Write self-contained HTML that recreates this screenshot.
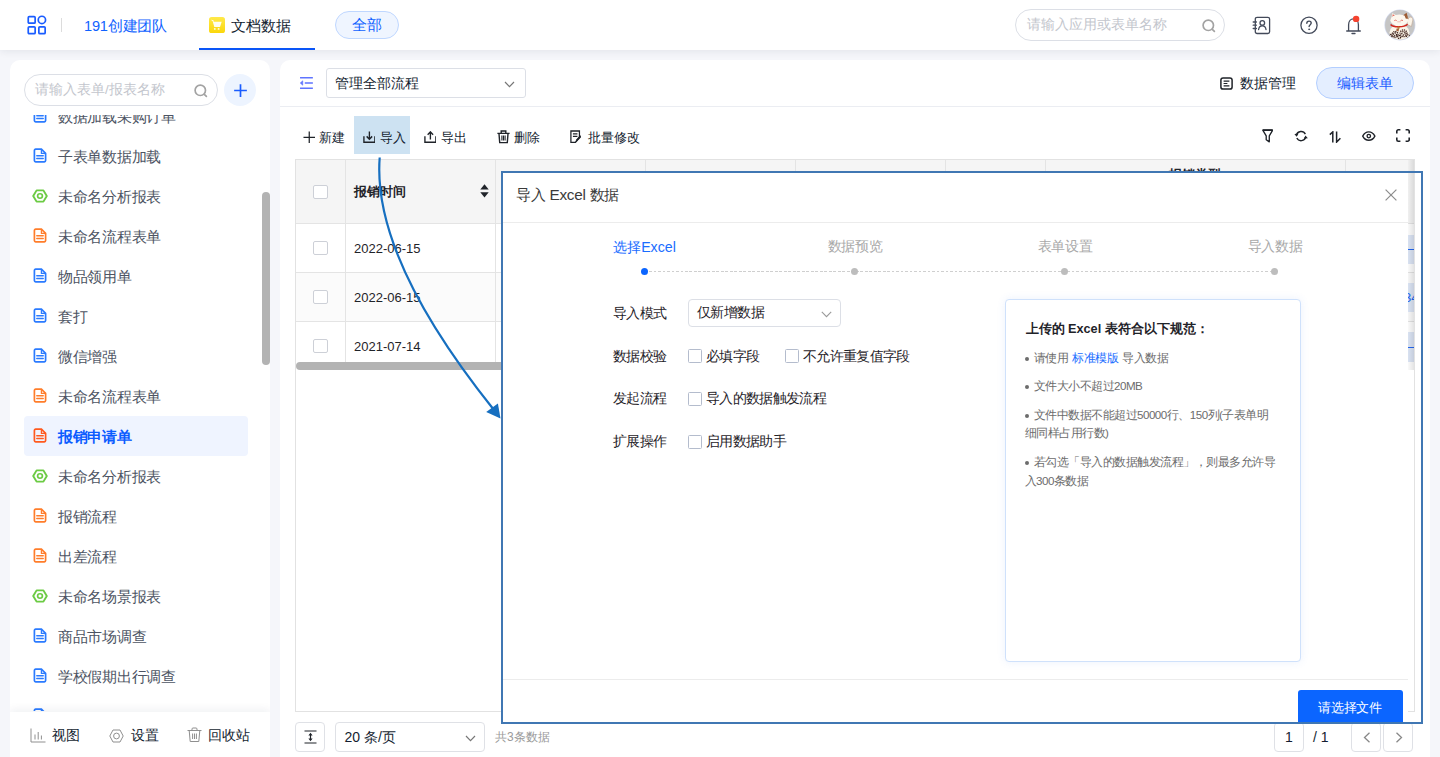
<!DOCTYPE html>
<html lang="zh">
<head>
<meta charset="utf-8">
<title>文档数据</title>
<style>
*{box-sizing:border-box;margin:0;padding:0}
html,body{width:1440px;height:757px;overflow:hidden}
body{font-family:"Liberation Sans",sans-serif;font-size:14px;color:#141e31;background:#f5f6fa;position:relative}
svg{display:block}
/* header */
#hdr{position:absolute;left:0;top:0;width:1440px;height:50px;background:#fff;box-shadow:0 1px 8px rgba(20,30,60,.09)}
#grid{position:absolute;left:27px;top:15px}
#team{position:absolute;left:84px;top:16px;letter-spacing:-.2px;font-size:14.6px;line-height:20px;color:#1062ff;white-space:nowrap}
#sep{position:absolute;left:61px;top:18px;width:1px;height:14px;background:#dcdcdc}
#tab{position:absolute;left:231px;top:16px;letter-spacing:-.1px;font-size:14.6px;line-height:20px;color:#141e31;white-space:nowrap}
#tabico{position:absolute;left:209px;top:17px}
#tabline{position:absolute;left:199px;top:47.5px;width:116px;height:2.5px;background:#0a55f7}
#all{position:absolute;left:335px;top:11px;width:64px;height:28px;border-radius:14px;background:#eff5ff;border:1px solid #bfd7ff;color:#1062ff;font-size:14.6px;line-height:27px;text-align:center}
#gsearch{position:absolute;left:1015px;top:9px;width:210px;height:32px;border-radius:16px;border:1px solid #dcdfe6;background:#fff}
#gsearch span{position:absolute;left:11px;top:6px;font-size:13.5px;line-height:18px;color:#c3c6cd;white-space:nowrap}
#gsearch svg{position:absolute;left:186px;top:8.500px}
.hi{position:absolute}
/* sidebar */
#side{position:absolute;left:10px;top:60px;width:260px;height:720px;background:#fff;border-radius:10px;overflow:hidden}
#ssearch{position:absolute;left:14px;top:14px;width:194px;height:32px;border-radius:16px;border:1px solid #dcdfe6;background:#fff}
#ssearch span{position:absolute;left:10px;top:6px;font-size:13.5px;line-height:18px;color:#c3c6cd;white-space:nowrap}
#ssearch svg{position:absolute;left:169px;top:8.500px}
#plus{position:absolute;left:214px;top:14px;width:32px;height:32px;border-radius:16px;background:#edf4ff}
#plus svg{position:absolute;left:8.5px;top:8.5px}
#list{position:absolute;left:0;top:55px;width:260px;height:596px;overflow:hidden}
.it{position:absolute;left:14px;width:224px;height:40px;border-radius:4px;font-size:14.5px;letter-spacing:-.3px;line-height:40px;color:#4d5463;white-space:nowrap}
.it span{position:absolute;left:34px;top:1px}
.it svg{position:absolute}
.it.d svg{left:9px;top:12px}
.it.h svg{left:8px;top:12.5px}
.it.sel{background:#eff4ff;color:#0b5cff;font-weight:bold}
#sscroll{position:absolute;left:252px;top:132px;width:8px;height:173px;border-radius:4px;background:#b3b3b3}
#sfoot{position:absolute;left:0;top:651.5px;width:260px;height:70px;background:#fff;box-shadow:0 -3px 8px rgba(20,30,60,.06)}
#sfoot span{position:absolute;top:13.5px;font-size:14px;line-height:20px;color:#141e31;white-space:nowrap}
#sfoot svg{position:absolute}
/* main */
#main{position:absolute;left:280px;top:60px;width:1150px;height:720px;background:#fff;border-radius:10px;overflow:hidden}
#mline{position:absolute;left:0;top:46px;width:1150px;height:1px;background:#ebedf2}
#ham{position:absolute;left:19px;top:16px}
#fsel{position:absolute;left:46px;top:8px;width:200px;height:30px;border:1px solid #dcdfe6;border-radius:3px;background:#fff}
#fsel span{position:absolute;left:8px;top:6px;letter-spacing:-.1px;font-size:13.5px;line-height:18px;color:#141e31;white-space:nowrap}
#fsel svg{position:absolute;left:177px;top:12px}
#dm{position:absolute;left:960px;top:14px;font-size:13.5px;line-height:20px;color:#141e31;white-space:nowrap}
#dmico{position:absolute;left:940px;top:16.5px}
#edit{position:absolute;left:1036px;top:7px;width:98px;height:32px;border-radius:16px;background:#e4eeff;border:1px solid #b3ceff;color:#1a5cff;font-size:13.5px;line-height:32px;text-align:center}
.tb{position:absolute;top:56px;height:38px;font-size:13px;line-height:44px;color:#141e31;white-space:nowrap}
.tb svg{position:absolute}
#imp{position:absolute;left:74px;top:56px;width:56px;height:38px;background:#cde2f2}
.ri{position:absolute}
/* table */
#tbl{position:absolute;left:15px;top:99px;width:1120px;height:553px;border:1px solid #e2e2e2;background:#fff;overflow:hidden}
#th{position:absolute;left:0;top:0;width:1120px;height:63px;background:#f5f5f5}
.hl{position:absolute;left:0;width:1120px;height:1px;background:#e4e4e4}
.vl{position:absolute;top:0;width:1px;height:210px;background:#e4e4e4}
.cb{position:absolute;left:17px;width:14.5px;height:14px;border:1px solid #cdd0d7;border-radius:2px;background:#fff}
.dt{position:absolute;left:58px;font-size:13px;line-height:16px;color:#1f2329;white-space:nowrap}
#hscroll{position:absolute;left:0;top:202px;width:900px;height:8px;background:#b3b3b3;border-radius:4px}
.pbox{position:absolute;top:662px;height:30px;border:1px solid #dfe1e6;border-radius:4px;background:#fff}
/* dialog */
#dlg{position:absolute;left:503px;top:173px;width:905px;height:550px;background:#fff;overflow:hidden;font-size:13.5px;color:#1f2329}
#dtitle{position:absolute;left:13px;top:12px;font-size:15.3px;letter-spacing:-.25px;line-height:20px;color:#3a3a3a;white-space:nowrap}
.dline{position:absolute;left:0;width:905px;height:1px;background:#ececec}
.stp{position:absolute;top:64px;letter-spacing:-.4px;width:120px;text-align:center;font-size:13.5px;line-height:20px;color:#a9a9a9;white-space:nowrap}
.dot{position:absolute;top:94.5px;width:7px;height:7px;border-radius:50%;background:#bdbdbd}
.dash{position:absolute;top:97.5px;height:1px;background:repeating-linear-gradient(to right,#cfcfcf 0,#cfcfcf 2.5px,transparent 2.5px,transparent 4.5px)}
.lb{position:absolute;left:109.5px;letter-spacing:-.45px;font-size:13.5px;line-height:18px;color:#1f2329;white-space:nowrap}
.ck{position:absolute;width:13.5px;height:14px;border:1px solid #b4bccd;border-radius:1.5px;background:#fff}
.ct{position:absolute;letter-spacing:-.65px;font-size:13.5px;line-height:18px;color:#1f2329;white-space:nowrap}
#dsel{position:absolute;left:185px;top:126px;width:153px;height:28px;border:1px solid #dcdfe6;border-radius:4px;background:#fff}
#dsel span{position:absolute;left:8px;top:4px;letter-spacing:-.6px;font-size:13.5px;line-height:18px;white-space:nowrap;color:#1f2329}
#dsel svg{position:absolute;left:132px;top:11px}
#info{position:absolute;left:502px;top:126px;width:296px;height:363px;border:1px solid #cfe1fb;border-radius:4px;background:#fff;box-shadow:0 0 8px rgba(60,120,240,.10)}
#info h4{position:absolute;left:19.5px;top:21px;font-size:12.7px;line-height:16px;font-weight:bold;color:#1f2329;white-space:nowrap}
#info p{position:absolute;left:18.5px;width:270px;white-space:nowrap;letter-spacing:-.5px;font-size:11.6px;line-height:18.6px;color:#6c6c6c}
#info i{display:inline-block;width:4px;height:4px;border-radius:50%;background:#6c6c6c;margin:0 5px 0 0;vertical-align:middle;position:relative;top:.3px}
#info a{color:#1a6dff;text-decoration:none}
#dbtn{position:absolute;letter-spacing:-.2px;left:794.5px;top:517px;width:105px;height:40px;background:#0b65ff;border-radius:3px;color:#fff;font-size:13.3px;line-height:35px;text-align:center}
#anno{position:absolute;left:501px;top:171px;width:922px;height:553px;border:2px solid #4077b3;pointer-events:none}
#dshadow{position:absolute;left:1408px;top:160px;width:6px;height:210px}
#arrow{position:absolute;left:0;top:0;pointer-events:none}
</style>
</head>
<body>
<div id="hdr">
  <svg id="grid" width="20" height="20" viewBox="0 0 20 20" fill="none" stroke="#1a5cff" stroke-width="1.700"><rect x="1.250" y="1.650" width="6.900" height="6.500" rx="1"/><circle cx="14.900" cy="4.900" r="3.650"/><rect x="1.250" y="11.850" width="6.900" height="6.800" rx="1"/><rect x="11.850" y="11.850" width="6.300" height="6.800" rx="1"/></svg>
  <div id="sep"></div>
  <div id="team">191创建团队</div>
  <svg id="tabico" width="16" height="16" viewBox="0 0 16 16"><defs><linearGradient id="yg" x1="0" y1="0" x2="0" y2="1"><stop offset="0" stop-color="#ffe94a"/><stop offset="1" stop-color="#fbd70c"/></linearGradient></defs><rect width="16" height="16" rx="2.600" fill="url(#yg)"/><path d="M2.900 3.300L4.300 3.500L4.700 4.700H12.700L11 10.100H5.300L3.700 4.300z" fill="#fffdf0"/><path d="M2.900 3.300L4.100 3.700" stroke="#fffdf0" stroke-width=".9" stroke-linecap="round"/><circle cx="5.800" cy="11.900" r=".95" fill="#fffbe0"/><circle cx="9.600" cy="11.900" r=".95" fill="#fffbe0"/></svg>
  <div id="tab">文档数据</div>
  <div id="tabline"></div>
  <div id="all">全部</div>
  <div id="gsearch"><span>请输入应用或表单名称</span><svg width="14" height="14" viewBox="0 0 14 14" fill="none" stroke="#a3a3a3" stroke-width="1.700" stroke-linecap="round"><circle cx="6.300" cy="6.300" r="5.200"/><path d="M10.300 10.300L12.400 12.400"/></svg></div>
  <svg class="hi" style="left:1252px;top:16px" width="19" height="19" viewBox="0 0 19 19" fill="none" stroke="#434a5a" stroke-width="1.300" stroke-linecap="round"><rect x="3.300" y="1.300" width="14.300" height="16.200" rx="1.800"/><path d="M1.200 6h3.200M1.200 9.200h3.200M1.200 12.500h3.200"/><circle cx="10.300" cy="6.900" r="2.300"/><path d="M6.600 13.500c.3-2.500 1.800-3.700 3.700-3.700s3.400 1.200 3.700 3.700"/></svg>
  <svg class="hi" style="left:1299px;top:16px" width="20" height="19" viewBox="0 0 20 19" fill="none" stroke="#434a5a" stroke-width="1.300" stroke-linecap="round"><circle cx="10" cy="9.200" r="8.100"/><path d="M7.800 7.300c0-1.400 1-2.200 2.200-2.200s2.200 .8 2.200 2c0 1.500-2.100 1.700-2.100 3.500" stroke-width="1.400"/><circle cx="10.100" cy="13.300" r=".55" fill="#434a5a" stroke-width=".7"/></svg>
  <svg class="hi" style="left:1345px;top:14px" width="18" height="22" viewBox="0 0 18 22" fill="none" stroke="#434a5a" stroke-width="1.300" stroke-linecap="round" stroke-linejoin="round"><path d="M1.700 17h13.600M3.600 17V10.800c0-3.700 2.300-5.900 4.900-5.900s4.900 2.200 4.900 5.900V17"/><path d="M7 19.500h3"/><circle cx="11.100" cy="4.900" r="3.200" fill="#f5432f" stroke="none"/></svg>
  <svg class="hi" style="left:1384px;top:9px" width="32" height="32" viewBox="0 0 32 32"><defs><clipPath id="av"><circle cx="15.900" cy="15.900" r="14.800"/></clipPath></defs><circle cx="15.900" cy="15.900" r="15.500" fill="#d3daee"/><g clip-path="url(#av)"><rect width="32" height="32" fill="#c5c5c5"/><path d="M23.400 15.500c-.4-3 .2-6.200 2.200-7.200 2-.8 3.400 .6 3.200 2.800l-1.400 6.400z" fill="#fbf4e8" stroke="#b99a86" stroke-width=".5"/><ellipse cx="15.500" cy="23.500" rx="10" ry="8" fill="#fbf4e8"/><path d="M7.400 9.600L8.300 4L12.600 6.600z" fill="#fbf4e8"/><path d="M8.300 8.600L8.800 5.200L11.200 6.700z" fill="#e0564a"/><path d="M18.300 6.900L22.600 3.700L24.300 10z" fill="#9c5a32"/><ellipse cx="15.300" cy="11.200" rx="8.900" ry="5.800" fill="#fdf7ee"/><path d="M20.500 6.200c1.800 .4 3 1.800 3.400 3.800l-2.200-.6z" fill="#9c5a32"/><path d="M10.300 11.600q1.200-.9 2.400 0M16.600 11.600q1.200-.9 2.400 0" stroke="#e0564a" stroke-width=".8" fill="none"/><path d="M13.200 12.800h3.600" stroke="#e59a8e" stroke-width=".6"/><path d="M6.600 15.400C9.500 18.600 20 18.600 23.600 15.200" stroke="#d3261c" stroke-width="1.500" fill="none"/><circle cx="14.500" cy="18.700" r="1.200" fill="#b9803a"/><path d="M12.600 19.400l2.400 .6-.4 2.400-2.400-.6z" fill="#a5623a"/><g fill="none" stroke="#3a1d17" stroke-width="1.300" stroke-dasharray="1.200 .8"><circle cx="11" cy="25.500" r="1.500"/><circle cx="11" cy="25.500" r="3"/><circle cx="19.500" cy="24.300" r="1.700"/><circle cx="19.500" cy="24.300" r="3.400"/><circle cx="15.200" cy="28" r="1.500"/><circle cx="24" cy="27.500" r="1.600"/><circle cx="6.500" cy="27" r="1.500"/></g></g></svg>
</div>

<div id="side">
  <div id="ssearch"><span>请输入表单/报表名称</span><svg width="14" height="14" viewBox="0 0 14 14" fill="none" stroke="#a3a3a3" stroke-width="1.700" stroke-linecap="round"><circle cx="6.300" cy="6.300" r="5.200"/><path d="M10.300 10.300L12.400 12.400"/></svg></div>
  <div id="plus"><svg width="15" height="15" viewBox="0 0 16 16" stroke="#1a5cff" stroke-width="1.800" stroke-linecap="butt"><path d="M8 1.2V14.8M1.2 8H14.8"/></svg></div>
  <div id="list">
<div class="it d" style="top:-19px"><svg width="14" height="15" viewBox="0 0 14 15" fill="none" stroke="#2b7bff" stroke-width="1.7" stroke-linejoin="round" stroke-linecap="round"><path d="M2.6 1.2H8.4L12.6 5.4V12.6a1.2 1.2 0 0 1-1.2 1.2H2.6a1.2 1.2 0 0 1-1.2-1.2V2.4a1.2 1.2 0 0 1 1.2-1.2z"/><path d="M8.4 1.4V5.4H12.4" stroke-width="1.3"/><path d="M3.800 7.800H10.200M3.800 10.500H10.200" stroke-width="1.500"/></svg><span>数据加载采购订单</span></div>
<div class="it d" style="top:21px"><svg width="14" height="15" viewBox="0 0 14 15" fill="none" stroke="#2b7bff" stroke-width="1.7" stroke-linejoin="round" stroke-linecap="round"><path d="M2.6 1.2H8.4L12.6 5.4V12.6a1.2 1.2 0 0 1-1.2 1.2H2.6a1.2 1.2 0 0 1-1.2-1.2V2.4a1.2 1.2 0 0 1 1.2-1.2z"/><path d="M8.4 1.4V5.4H12.4" stroke-width="1.3"/><path d="M3.800 7.800H10.200M3.800 10.500H10.200" stroke-width="1.500"/></svg><span>子表单数据加载</span></div>
<div class="it h" style="top:61px"><svg width="16" height="14" viewBox="0 0 16 15" preserveAspectRatio="none" fill="none" stroke="#6ccb44" stroke-width="1.900" stroke-linejoin="round"><path d="M1.2 7.5L4.6 1.5H11.4L14.8 7.5L11.4 13.5H4.6z"/><circle cx="8" cy="7.5" r="2.4" stroke-width="1.7"/></svg><span>未命名分析报表</span></div>
<div class="it d" style="top:101px"><svg width="14" height="15" viewBox="0 0 14 15" fill="none" stroke="#ff7d2b" stroke-width="1.7" stroke-linejoin="round" stroke-linecap="round"><path d="M2.6 1.2H8.4L12.6 5.4V12.6a1.2 1.2 0 0 1-1.2 1.2H2.6a1.2 1.2 0 0 1-1.2-1.2V2.4a1.2 1.2 0 0 1 1.2-1.2z"/><path d="M8.4 1.4V5.4H12.4" stroke-width="1.3"/><path d="M3.800 7.800H10.200M3.800 10.500H10.200" stroke-width="1.500"/></svg><span>未命名流程表单</span></div>
<div class="it d" style="top:141px"><svg width="14" height="15" viewBox="0 0 14 15" fill="none" stroke="#2b7bff" stroke-width="1.7" stroke-linejoin="round" stroke-linecap="round"><path d="M2.6 1.2H8.4L12.6 5.4V12.6a1.2 1.2 0 0 1-1.2 1.2H2.6a1.2 1.2 0 0 1-1.2-1.2V2.4a1.2 1.2 0 0 1 1.2-1.2z"/><path d="M8.4 1.4V5.4H12.4" stroke-width="1.3"/><path d="M3.800 7.800H10.200M3.800 10.500H10.200" stroke-width="1.500"/></svg><span>物品领用单</span></div>
<div class="it d" style="top:181px"><svg width="14" height="15" viewBox="0 0 14 15" fill="none" stroke="#2b7bff" stroke-width="1.7" stroke-linejoin="round" stroke-linecap="round"><path d="M2.6 1.2H8.4L12.6 5.4V12.6a1.2 1.2 0 0 1-1.2 1.2H2.6a1.2 1.2 0 0 1-1.2-1.2V2.4a1.2 1.2 0 0 1 1.2-1.2z"/><path d="M8.4 1.4V5.4H12.4" stroke-width="1.3"/><path d="M3.800 7.800H10.200M3.800 10.500H10.200" stroke-width="1.500"/></svg><span>套打</span></div>
<div class="it d" style="top:221px"><svg width="14" height="15" viewBox="0 0 14 15" fill="none" stroke="#2b7bff" stroke-width="1.7" stroke-linejoin="round" stroke-linecap="round"><path d="M2.6 1.2H8.4L12.6 5.4V12.6a1.2 1.2 0 0 1-1.2 1.2H2.6a1.2 1.2 0 0 1-1.2-1.2V2.4a1.2 1.2 0 0 1 1.2-1.2z"/><path d="M8.4 1.4V5.4H12.4" stroke-width="1.3"/><path d="M3.800 7.800H10.200M3.800 10.500H10.200" stroke-width="1.500"/></svg><span>微信增强</span></div>
<div class="it d" style="top:261px"><svg width="14" height="15" viewBox="0 0 14 15" fill="none" stroke="#ff7d2b" stroke-width="1.7" stroke-linejoin="round" stroke-linecap="round"><path d="M2.6 1.2H8.4L12.6 5.4V12.6a1.2 1.2 0 0 1-1.2 1.2H2.6a1.2 1.2 0 0 1-1.2-1.2V2.4a1.2 1.2 0 0 1 1.2-1.2z"/><path d="M8.4 1.4V5.4H12.4" stroke-width="1.3"/><path d="M3.800 7.800H10.200M3.800 10.500H10.200" stroke-width="1.500"/></svg><span>未命名流程表单</span></div>
<div class="it sel d" style="top:301px"><svg width="14" height="15" viewBox="0 0 14 15" fill="none" stroke="#ff5a1f" stroke-width="1.7" stroke-linejoin="round" stroke-linecap="round"><path d="M2.6 1.2H8.4L12.6 5.4V12.6a1.2 1.2 0 0 1-1.2 1.2H2.6a1.2 1.2 0 0 1-1.2-1.2V2.4a1.2 1.2 0 0 1 1.2-1.2z"/><path d="M8.4 1.4V5.4H12.4" stroke-width="1.3"/><path d="M3.800 7.800H10.200M3.800 10.500H10.200" stroke-width="1.500"/></svg><span>报销申请单</span></div>
<div class="it h" style="top:341px"><svg width="16" height="14" viewBox="0 0 16 15" preserveAspectRatio="none" fill="none" stroke="#6ccb44" stroke-width="1.900" stroke-linejoin="round"><path d="M1.2 7.5L4.6 1.5H11.4L14.8 7.5L11.4 13.5H4.6z"/><circle cx="8" cy="7.5" r="2.4" stroke-width="1.7"/></svg><span>未命名分析报表</span></div>
<div class="it d" style="top:381px"><svg width="14" height="15" viewBox="0 0 14 15" fill="none" stroke="#ff7d2b" stroke-width="1.7" stroke-linejoin="round" stroke-linecap="round"><path d="M2.6 1.2H8.4L12.6 5.4V12.6a1.2 1.2 0 0 1-1.2 1.2H2.6a1.2 1.2 0 0 1-1.2-1.2V2.4a1.2 1.2 0 0 1 1.2-1.2z"/><path d="M8.4 1.4V5.4H12.4" stroke-width="1.3"/><path d="M3.800 7.800H10.200M3.800 10.500H10.200" stroke-width="1.500"/></svg><span>报销流程</span></div>
<div class="it d" style="top:421px"><svg width="14" height="15" viewBox="0 0 14 15" fill="none" stroke="#ff7d2b" stroke-width="1.7" stroke-linejoin="round" stroke-linecap="round"><path d="M2.6 1.2H8.4L12.6 5.4V12.6a1.2 1.2 0 0 1-1.2 1.2H2.6a1.2 1.2 0 0 1-1.2-1.2V2.4a1.2 1.2 0 0 1 1.2-1.2z"/><path d="M8.4 1.4V5.4H12.4" stroke-width="1.3"/><path d="M3.800 7.800H10.200M3.800 10.500H10.200" stroke-width="1.500"/></svg><span>出差流程</span></div>
<div class="it h" style="top:461px"><svg width="16" height="14" viewBox="0 0 16 15" preserveAspectRatio="none" fill="none" stroke="#6ccb44" stroke-width="1.900" stroke-linejoin="round"><path d="M1.2 7.5L4.6 1.5H11.4L14.8 7.5L11.4 13.5H4.6z"/><circle cx="8" cy="7.5" r="2.4" stroke-width="1.7"/></svg><span>未命名场景报表</span></div>
<div class="it d" style="top:501px"><svg width="14" height="15" viewBox="0 0 14 15" fill="none" stroke="#2b7bff" stroke-width="1.7" stroke-linejoin="round" stroke-linecap="round"><path d="M2.6 1.2H8.4L12.6 5.4V12.6a1.2 1.2 0 0 1-1.2 1.2H2.6a1.2 1.2 0 0 1-1.2-1.2V2.4a1.2 1.2 0 0 1 1.2-1.2z"/><path d="M8.4 1.4V5.4H12.4" stroke-width="1.3"/><path d="M3.800 7.800H10.200M3.800 10.500H10.200" stroke-width="1.500"/></svg><span>商品市场调查</span></div>
<div class="it d" style="top:541px"><svg width="14" height="15" viewBox="0 0 14 15" fill="none" stroke="#2b7bff" stroke-width="1.7" stroke-linejoin="round" stroke-linecap="round"><path d="M2.6 1.2H8.4L12.6 5.4V12.6a1.2 1.2 0 0 1-1.2 1.2H2.6a1.2 1.2 0 0 1-1.2-1.2V2.4a1.2 1.2 0 0 1 1.2-1.2z"/><path d="M8.4 1.4V5.4H12.4" stroke-width="1.3"/><path d="M3.800 7.800H10.200M3.800 10.500H10.200" stroke-width="1.500"/></svg><span>学校假期出行调查</span></div>
<div class="it d" style="top:581px"><svg width="14" height="15" viewBox="0 0 14 15" fill="none" stroke="#2b7bff" stroke-width="1.7" stroke-linejoin="round" stroke-linecap="round"><path d="M2.6 1.2H8.4L12.6 5.4V12.6a1.2 1.2 0 0 1-1.2 1.2H2.6a1.2 1.2 0 0 1-1.2-1.2V2.4a1.2 1.2 0 0 1 1.2-1.2z"/><path d="M8.4 1.4V5.4H12.4" stroke-width="1.3"/><path d="M3.800 7.800H10.200M3.800 10.500H10.200" stroke-width="1.500"/></svg><span></span></div>
  </div>
  <div id="sscroll"></div>
  <div id="sfoot">
    <svg style="left:20px;top:16px" width="16" height="15" viewBox="0 0 16 15" fill="none" stroke="#8f8f8f" stroke-width="1"><path d="M1 .5V14H15.5"/><path d="M5 6.5V11.5M8.2 4V11.5M11.4 7.5V11.5"/></svg>
    <span style="left:42px">视图</span>
    <svg style="left:99px;top:17px" width="15" height="14" viewBox="0 0 15 14" fill="none" stroke="#8f8f8f" stroke-width="1"><path d="M.8 7L4 1H11L14.2 7L11 13H4z"/><circle cx="7.5" cy="7" r="2.9"/></svg>
    <span style="left:121px">设置</span>
    <svg style="left:177px;top:15px" width="15" height="16" viewBox="0 0 15 16" fill="none" stroke="#8f8f8f" stroke-width="1"><path d="M.5 3.5H14.5M5 3.5V2a1 1 0 0 1 1-1H9a1 1 0 0 1 1 1V3.5M2.2 3.5L3.2 14.5H11.8L12.8 3.5M5.6 6.5V12M7.5 6.5V12M9.4 6.5V12"/></svg>
    <span style="left:198px">回收站</span>
  </div>
</div>

<div id="main">
  <div id="mline"></div>
  <svg id="ham" width="14.5" height="14" viewBox="0 0 14 14" preserveAspectRatio="none" fill="none" stroke="#5f74ff" stroke-width="1.5"><path d="M1 1.8H13.4M5.6 7H13.4M1 12.2H13.4"/><path d="M3.6 4.8L1.2 7L3.6 9.2z" fill="#5f74ff" stroke-width=".6"/></svg>
  <div id="fsel"><span>管理全部流程</span><svg width="11" height="7" viewBox="0 0 11 7" fill="none" stroke="#777" stroke-width="1.2"><path d="M1 1L5.5 5.6L10 1"/></svg></div>
  <svg id="dmico" width="13" height="13" viewBox="0 0 13 13" fill="none" stroke="#1f2329" stroke-width="1.5"><rect x=".9" y=".9" width="11.2" height="11.2" rx="2.2"/><path d="M3.6 4.2H9.4M3.6 6.500H7.400M3.600 8.800H9.400" stroke-width="1.200"/></svg>
  <div id="dm">数据管理</div>
  <div id="edit">编辑表单</div>

  <div id="imp"></div>
  <div class="tb" style="left:38.5px"><svg style="left:-16px;top:14.5px" width="12.500" height="12.500" viewBox="0 0 13 13" stroke="#1f2329" stroke-width="1.3"><path d="M6.5 .5V12.5M.5 6.5H12.5"/></svg>新建</div>
  <div class="tb" style="left:100px"><svg style="left:-17.5px;top:14.500px" width="12.800" height="12.500" viewBox="0 0 14 13" preserveAspectRatio="none" fill="none" stroke="#1f2329" stroke-width="1.5"><path d="M1 5.4V11.6H13V5.4"/><path d="M7 .6V8.2M4 5.6L7 8.6L10 5.6"/></svg>导入</div>
  <div class="tb" style="left:161px"><svg style="left:-17.5px;top:14.500px" width="12.800" height="12.500" viewBox="0 0 14 13" preserveAspectRatio="none" fill="none" stroke="#1f2329" stroke-width="1.5"><path d="M1 5.4V11.6H13V5.4"/><path d="M7 8.8V1.2M4 3.8L7 .9L10 3.8"/></svg>导出</div>
  <div class="tb" style="left:233.5px"><svg style="left:-16.5px;top:13.5px" width="13" height="14" viewBox="0 0 13 14" fill="none" stroke="#1f2329" stroke-width="1.4"><path d="M.4 3.4H12.6M4.2 3.2V1H8.8V3.2"/><path d="M2 3.6L2.7 12.6H10.3L11 3.6" /><path d="M4.9 5.6V10.6M6.5 5.6V10.6M8.1 5.6V10.6" stroke-width="1.1"/></svg>删除</div>
  <div class="tb" style="left:307.5px"><svg style="left:-18px;top:14px" width="11.800" height="13.500" viewBox="0 0 13 14" preserveAspectRatio="none" fill="none" stroke="#1f2329" stroke-width="1.4"><path d="M1 1H10.4V7.4L6 12.8H1z"/><path d="M3.2 4H8.2M3.2 6.6H8.2" stroke-width="1.1"/><path d="M6.4 12.6L7.4 9.6L11.2 5.8L12.4 7L8.6 10.8z" fill="#1f2329" stroke-width=".6"/></svg>批量修改</div>

  <svg class="ri" style="left:981.500px;top:68.500px" width="11.500" height="14.200" viewBox="0 0 12 15" preserveAspectRatio="none" fill="none" stroke="#1f2329" stroke-width="1.4" stroke-linejoin="round"><path d="M.8 1.2H11.2L7.6 7.2V13.6L4.4 11.4V7.2z"/><path d="M1 1.2H11" stroke-width="2"/></svg>
  <svg class="ri" style="left:1014px;top:69.500px" width="14.200" height="12.200" viewBox="0 0 15 13" preserveAspectRatio="none" fill="none" stroke="#1f2329" stroke-width="1.5"><path d="M2.6 5.6A5 5 0 0 1 12 4.4"/><path d="M12.4 7.4A5 5 0 0 1 3 8.6"/><path d="M.4 4.2L2.8 7.2L4.8 3.8z" fill="#1f2329" stroke="none"/><path d="M14.6 8.8L12.2 5.8L10.2 9.2z" fill="#1f2329" stroke="none"/></svg>
  <svg class="ri" style="left:1049px;top:70.5px" width="13" height="12" viewBox="0 0 13 12" fill="none" stroke="#1f2329" stroke-width="1.5"><path d="M.8 3.6L3.8 .9V11.4"/><path d="M7.6 .6V11.1L11.4 7.2"/></svg>
  <svg class="ri" style="left:1082.300px;top:70.500px" width="13.600" height="10.200" viewBox="0 0 15 11" preserveAspectRatio="none" fill="none" stroke="#1f2329" stroke-width="1.5"><path d="M.8 5.5C2.4 2.4 4.8 1 7.5 1s5.1 1.4 6.700 4.5C12.600 8.600 10.200 10 7.500 10S2.400 8.600 .800 5.500z"/><circle cx="7.500" cy="5.500" r="1.900"/></svg>
  <svg class="ri" style="left:1116px;top:69.200px" width="14" height="13" viewBox="0 0 14 13" fill="none" stroke="#1f2329" stroke-width="1.6"><path d="M.8 4.4V2.300A1.500 1.500 0 0 1 2.300 .8H4.400M9.600 .8H11.700A1.500 1.500 0 0 1 13.200 2.300V4.400M13.200 8.600V10.700A1.500 1.500 0 0 1 11.700 12.200H9.600M4.400 12.200H2.300A1.500 1.500 0 0 1 .8 10.700V8.600"/></svg>

  <div id="tbl">
    <div id="th"></div>
    <div class="hl" style="top:63px"></div><div class="hl" style="top:112px"></div><div class="hl" style="top:161px"></div>
    <div style="position:absolute;left:0;top:113px;width:1120px;height:48px;background:#fbfbfb"></div>
    <div class="vl" style="left:49px"></div><div class="vl" style="left:199px"></div><div class="vl" style="left:349px"></div><div class="vl" style="left:499px"></div><div class="vl" style="left:649px"></div><div class="vl" style="left:749px"></div><div class="vl" style="left:1049px"></div>
    <div class="cb" style="top:25px"></div><div class="cb" style="top:81px"></div><div class="cb" style="top:130px"></div><div class="cb" style="top:179px"></div>
    <div class="dt" style="top:23.500px;font-weight:bold;color:#1f2329">报销时间</div>
    <svg style="position:absolute;left:184px;top:24px" width="9" height="14" viewBox="0 0 9 14" fill="#1f2329"><path d="M4.500 .3L8.700 5.600H.3z"/><path d="M4.500 13.600L8.700 8.300H.3z"/></svg>
    <div class="dt" style="top:80.500px">2022-06-15</div>
    <div class="dt" style="top:129.500px">2022-06-15</div>
    <div class="dt" style="top:178.500px">2021-07-14</div>
    <div class="dt" style="top:7px;width:300px;left:749px;text-align:center;font-weight:bold">报销类型</div>
    <div style="position:absolute;left:1112px;top:75px;width:8px;height:29px;background:#dde6f6"></div>
    <div style="position:absolute;left:1112px;top:123px;width:8px;height:29px;background:#dde6f6"></div>
    <div style="position:absolute;left:1112px;top:172px;width:8px;height:30px;background:#dde6f6"></div>
    <div style="position:absolute;left:1112px;top:88.500px;width:8px;height:1.500px;background:#2468f2"></div>
    <div style="position:absolute;left:1112px;top:186.500px;width:8px;height:1.500px;background:#2468f2"></div>
    <div style="position:absolute;left:1108px;top:130px;font-size:13px;line-height:16px;color:#2468f2">34</div>
    <div id="hscroll"></div>
  </div>

  <div class="pbox" style="left:15px;width:30px"><svg style="position:absolute;left:8px;top:7px" width="13" height="14" viewBox="0 0 13 14" fill="none" stroke="#1f2329" stroke-width="1.2"><path d="M.5 1H12.500M.5 13H12.500"/><path d="M6.500 4V10" /><path d="M6.500 2.800L8.600 5.400H4.400z M6.500 11.200L8.600 8.600H4.400z" fill="#1f2329" stroke="none"/></svg></div>
  <div class="pbox" style="left:55px;width:150px"><span style="position:absolute;left:8.500px;top:5px;font-size:14px;line-height:18px;white-space:nowrap">20 条/页</span><svg style="position:absolute;left:129px;top:12px" width="11" height="7" viewBox="0 0 11 7" fill="none" stroke="#777" stroke-width="1.2"><path d="M1 1L5.500 5.600L10 1"/></svg></div>
  <div style="position:absolute;left:215px;top:669px;font-size:12px;line-height:16px;color:#9a9a9a;white-space:nowrap">共3条数据</div>
  <div class="pbox" style="left:994px;width:30px;text-align:center;font-size:14px;line-height:28px">1</div>
  <div style="position:absolute;left:1033px;top:668px;font-size:14px;line-height:18px;white-space:nowrap">/ 1</div>
  <div class="pbox" style="left:1071px;width:30px"><svg style="position:absolute;left:10.500px;top:9px" width="8" height="11" viewBox="0 0 8 11" fill="none" stroke="#888" stroke-width="1.300"><path d="M6.500 .8L1.500 5.500L6.500 10.200"/></svg></div>
  <div class="pbox" style="left:1103px;width:30px"><svg style="position:absolute;left:10.500px;top:9px" width="8" height="11" viewBox="0 0 8 11" fill="none" stroke="#888" stroke-width="1.300"><path d="M1.500 .8L6.500 5.500L1.500 10.200"/></svg></div>
</div>

<div id="dshadow" style="background:linear-gradient(to right,rgba(0,0,0,.02),rgba(0,0,0,.11))"></div>

<div id="dlg">
  <div id="dtitle">导入 Excel 数据</div>
  <svg style="position:absolute;left:882px;top:16px" width="12" height="12" viewBox="0 0 12 12" stroke="#8c8c8c" stroke-width="1.200"><path d="M.6 .6L11.400 11.400M11.400 .6L.6 11.400"/></svg>
  <div class="dline" style="top:49px"></div>
  <div class="stp" style="left:81.500px;color:#1a6dff;font-size:14.200px;letter-spacing:0">选择Excel</div>
  <div class="stp" style="left:292px">数据预览</div>
  <div class="stp" style="left:502px">表单设置</div>
  <div class="stp" style="left:712px">导入数据</div>
  <div class="dash" style="left:146px;width:622px"></div>
  <div class="dot" style="left:137.500px;background:#0b65ff"></div>
  <div class="dot" style="left:347.500px"></div>
  <div class="dot" style="left:557.500px"></div>
  <div class="dot" style="left:767.500px"></div>

  <div class="lb" style="top:131.500px">导入模式</div>
  <div id="dsel"><span>仅新增数据</span><svg width="11" height="7" viewBox="0 0 11 7" fill="none" stroke="#9a9a9a" stroke-width="1.100"><path d="M.8 .8L5.500 5.600L10.200 .8"/></svg></div>
  <div class="lb" style="top:174.500px">数据校验</div>
  <div class="ck" style="left:185px;top:176px"></div><div class="ct" style="left:203px;top:174.500px">必填字段</div>
  <div class="ck" style="left:282px;top:176px"></div><div class="ct" style="left:300px;top:174.500px">不允许重复值字段</div>
  <div class="lb" style="top:216.500px">发起流程</div>
  <div class="ck" style="left:185px;top:219px"></div><div class="ct" style="left:203px;top:216.500px">导入的数据触发流程</div>
  <div class="lb" style="top:259.500px">扩展操作</div>
  <div class="ck" style="left:185px;top:262px"></div><div class="ct" style="left:203px;top:259.500px">启用数据助手</div>

  <div id="info">
    <h4>上传的 Excel 表符合以下规范：</h4>
    <p style="top:48.5px;word-spacing:1.5px"><i></i>请使用 <a>标准模版</a> 导入数据</p>
    <p style="top:77px"><i></i>文件大小不超过20MB</p>
    <p style="top:105.500px"><i></i>文件中数据不能超过50000行、150列(子表单明<br>细同样占用行数)</p>
    <p style="top:153px"><i></i>若勾选「导入的数据触发流程」，则最多允许导<br>入300条数据</p>
  </div>
  <div class="dline" style="top:506px"></div>
  <div id="dbtn">请选择文件</div>
</div>
<div id="anno"></div>
<svg id="arrow" width="1440" height="757" viewBox="0 0 1440 757" fill="none"><path d="M379.700 157.500C373.500 238 430 330 494 410" stroke="#166fc0" stroke-width="2.200"/><path d="M500.500 418.500L486.200 411.900L497.900 403.500z" fill="#166fc0"/></svg>
</body>
</html>
